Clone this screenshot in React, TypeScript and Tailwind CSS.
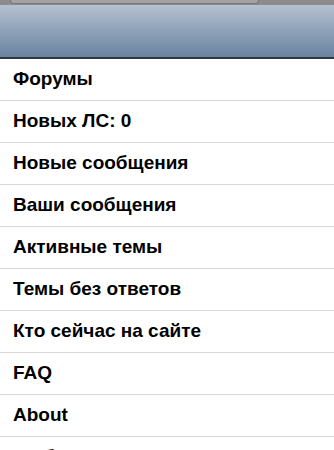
import React from 'react';

const items = [
  'Форумы',
  'Новых ЛС: 0',
  'Новые сообщения',
  'Ваши сообщения',
  'Активные темы',
  'Темы без ответов',
  'Кто сейчас на сайте',
  'FAQ',
  'About',
  'Выбор стиля: Тема',
];

const App = () => {
  return (
    <div className="w-[334px] h-[450px] overflow-hidden bg-white" style={{ fontFamily: '"Liberation Sans", Arial, sans-serif' }}>
      {/* browser tab strip */}
      <div className="h-[5px] bg-[#8c8c8c] flex">
        <div className="ml-[10px] w-[249px] h-[4px] bg-[#a3a3a3] rounded-b-[4px] border-x border-b border-[#777]" />
      </div>
      {/* toolbar */}
      <div className="h-[54px] bg-gradient-to-b from-[#b4c1d1] to-[#6b83a0] border-b-2 border-[#2e3845]" />
      <ul>
        {items.map((item) => (
          <li
            key={item}
            className="h-[42px] border-b border-[#d9d9d9] flex items-center pl-[13px] text-[19px] font-bold text-black"
          >
            {item}
          </li>
        ))}
      </ul>
    </div>
  );
};

export default App;
